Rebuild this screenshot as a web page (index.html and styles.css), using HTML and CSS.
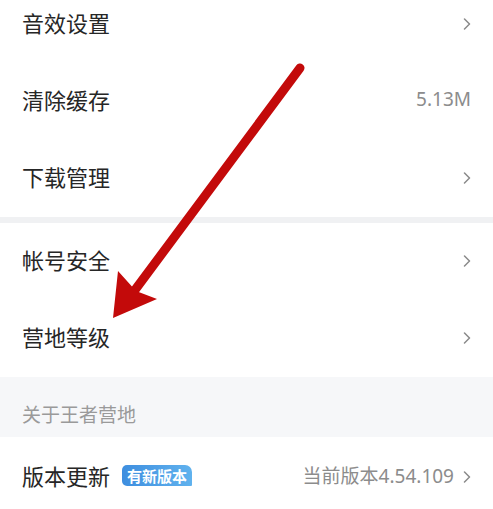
FILE: index.html
```html
<!DOCTYPE html>
<html>
  <head>
    <meta charset="UTF-8" />
    <title>设置</title>
    <link rel="stylesheet" href="styles.css">
  </head>
  <body>
    <div class="page">
      <div class="group">
        <div class="row">
          <span class="row-title">音效设置</span>
          <svg class="chevron" viewBox="0 0 8 12"><path d="M1.5 1 L6.5 6 L1.5 11" /></svg>
        </div>
        <div class="row">
          <span class="row-title">清除缓存</span>
          <span class="row-value">5.13M</span>
        </div>
        <div class="row">
          <span class="row-title">下载管理</span>
          <svg class="chevron" viewBox="0 0 8 12"><path d="M1.5 1 L6.5 6 L1.5 11" /></svg>
        </div>
      </div>

      <div class="divider"></div>

      <div class="group">
        <div class="row">
          <span class="row-title">帐号安全</span>
          <svg class="chevron" viewBox="0 0 8 12"><path d="M1.5 1 L6.5 6 L1.5 11" /></svg>
        </div>
        <div class="row">
          <span class="row-title">营地等级</span>
          <svg class="chevron" viewBox="0 0 8 12"><path d="M1.5 1 L6.5 6 L1.5 11" /></svg>
        </div>
      </div>

      <div class="section-header">关于王者营地</div>

      <div class="group">
        <div class="row row-last">
          <span class="row-title">版本更新</span>
          <span class="badge">有新版本</span>
          <span class="row-value">当前版本4.54.109</span>
          <svg class="chevron" viewBox="0 0 8 12"><path d="M1.5 1 L6.5 6 L1.5 11" /></svg>
        </div>
      </div>

      <!-- red annotation arrow drawn over the list -->
      <svg class="annotation" viewBox="0 0 493 509">
        <line x1="300" y1="68" x2="132" y2="294" />
        <polygon points="113,318 118,271 136,291 157,299" />
      </svg>
    </div>
  </body>
</html>
```

FILE: styles.css
```css
html, body {
  margin: 0;
  padding: 0;
  background: #fff;
  font-family: "Noto Sans", "Noto Sans CJK SC", sans-serif;
  overflow: hidden;
}

.page {
  position: relative;
  margin-top: -14px;
}

/* List rows */
.row {
  display: flex;
  align-items: center;
  box-sizing: border-box;
  height: 77px;
  padding: 0 22px 5px;
  background: #fff;
}

.row-last {
  height: 81px;
}

.row-title {
  font-size: 22px;
  color: #262626;
  flex: 1;
}

.row-last .row-title {
  flex: none;
}

.row-value {
  font-size: 19px;
  color: #8c8c8c;
}

.row-last .row-value {
  margin-left: auto;
  margin-right: 9px;
}

.chevron {
  width: 8px;
  height: 12px;
  margin-top: 3px;
  fill: none;
  stroke: #8a8a8a;
  stroke-width: 1.5;
  stroke-linecap: round;
  stroke-linejoin: round;
}

.badge {
  margin-left: 12px;
  height: 21px;
  padding: 0 5px;
  display: flex;
  align-items: center;
  font-size: 15px;
  font-weight: bold;
  color: #fff;
  background: linear-gradient(90deg, #3e8edf, #60b2ee);
  border-radius: 5px 7px 1px 5px;
}

/* Separators */
.divider {
  height: 6px;
  background: #f0f1f3;
}

.section-header {
  height: 60px;
  box-sizing: border-box;
  padding: 23px 22px 0;
  background: #f6f7f9;
  font-size: 19px;
  color: #9a9a9a;
}

/* Annotation overlay */
.annotation {
  position: absolute;
  top: 14px;
  left: 0;
  width: 493px;
  height: 509px;
  pointer-events: none;
}

.annotation line {
  stroke: #c30a0a;
  stroke-width: 9;
  stroke-linecap: round;
}

.annotation polygon {
  fill: #c30a0a;
}
```
